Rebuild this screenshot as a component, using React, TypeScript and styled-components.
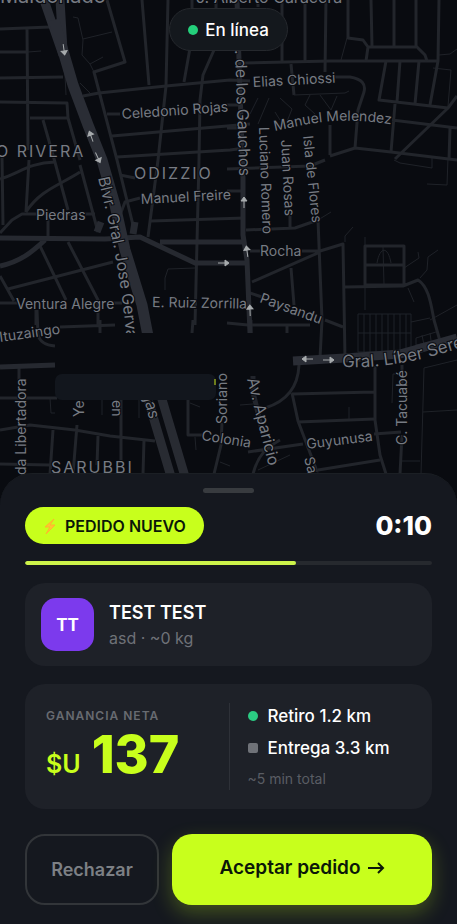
import React from "react";
import styled, { createGlobalStyle } from "styled-components";

const GlobalStyle = createGlobalStyle`
  * { box-sizing: border-box; }
  body { margin: 0; background: #090b10; }
  button { font: inherit; cursor: pointer; }
`;

const Screen = styled.main`
  position: relative;
  min-height: 100vh;
  display: flex;
  flex-direction: column;
  overflow: hidden;
  font-family: Inter, sans-serif;
  color: #fff;
`;

const MapCanvas = styled.svg`
  position: absolute;
  inset: 0;
  width: 100%;
  height: 100%;
`;

const StatusPill = styled.div`
  position: relative;
  align-self: center;
  display: flex;
  align-items: center;
  gap: 7px;
  height: 43px;
  margin: 8px 0 24px;
  padding: 0 18px;
  border: 1px solid #25282d;
  border-radius: 22px;
  background: #14181d;
  font: 500 17px/24px Inter, sans-serif;
`;

const Marker = styled.span<{ $color: string; $radius: number }>`
  flex: none;
  width: 10px;
  height: 10px;
  border-radius: ${(p) => p.$radius}px;
  background: ${(p) => p.$color};
`;

const Sheet = styled.section`
  position: relative;
  margin-top: auto;
  padding: 14px 25px 19px;
  border-radius: 32px 32px 0 0;
  border-top: 1px solid #1b1f24;
  background: #15181f;
  display: flex;
  flex-direction: column;
`;

const Handle = styled.div`
  align-self: center;
  width: 51px;
  height: 5px;
  border-radius: 3px;
  background: #383b3f;
`;

const SheetHeader = styled.header`
  display: flex;
  align-items: center;
  justify-content: space-between;
  margin-top: 14px;
`;

const NewOrderBadge = styled.h1`
  display: flex;
  align-items: center;
  gap: 8px;
  height: 37px;
  margin: 0;
  padding: 0 18px;
  border-radius: 19px;
  background: #c8ff1c;
  color: #0b1708;
  font: 600 16px/20px Inter, sans-serif;
`;

const Timer = styled.time`
  font: 800 26px/36px Inter, sans-serif;
`;

const Track = styled.div`
  height: 4px;
  margin-top: 17px;
  border-radius: 2px;
  background: #26292e;
  overflow: hidden;
`;

const TrackFill = styled.div`
  height: 100%;
  border-radius: 2px;
  background: #cdf34a;
`;

const Card = styled.article`
  margin-top: 18px;
  border-radius: 20px;
  background: #1e2128;
`;

const CustomerCard = styled(Card)`
  display: flex;
  align-items: center;
  gap: 15px;
  padding: 15px 16px;
`;

const Avatar = styled.div`
  display: grid;
  place-items: center;
  width: 53px;
  height: 53px;
  border-radius: 15px;
  background: #7c3aed;
  font: 700 17px/24px Inter, sans-serif;
`;

const CustomerName = styled.h2`
  margin: 0;
  padding-top: 2px;
  font: 600 18px/26px Inter, sans-serif;
`;

const CustomerDetail = styled.p`
  margin: 0;
  color: #6f7278;
  font: 400 16px/25px Inter, sans-serif;
`;

const EarningsCard = styled(Card)`
  display: grid;
  grid-template-columns: 1fr 1fr;
  padding: 19px 21px;
`;

const Earnings = styled.div`
  padding-top: 4px;
`;

const EarningsLabel = styled.h3`
  margin: 0;
  color: #686b71;
  font: 600 12px/17px Inter, sans-serif;
  letter-spacing: 1px;
`;

const Amount = styled.p`
  display: flex;
  align-items: baseline;
  gap: 11px;
  margin: 0;
  color: #c8ff1c;
  font: 800 52px/62px Inter, sans-serif;
`;

const Currency = styled.span`
  font: 600 25px/36px Inter, sans-serif;
`;

const Trip = styled.div`
  padding-left: 18px;
  border-left: 1px solid #2e3138;
`;

const Stop = styled.div`
  display: flex;
  align-items: center;
  gap: 10px;
  height: 26px;
  margin-bottom: 6px;
  font: 500 17px/24px Inter, sans-serif;
`;

const TripTime = styled.p`
  margin: 0;
  color: #5a5d64;
  font: 400 14px/23px Inter, sans-serif;
`;

const Actions = styled.footer`
  display: grid;
  grid-template-columns: 134fr 260fr;
  gap: 13px;
  margin-top: 25px;
`;

const ActionButton = styled.button<{ $primary?: boolean }>`
  display: flex;
  align-items: center;
  justify-content: center;
  gap: 6px;
  height: 71px;
  padding: ${(p) => (p.$primary ? "0 8px 4px" : "0 8px")};
  border: ${(p) => (p.$primary ? "0" : "2px solid #323539")};
  border-radius: 20px;
  background: ${(p) => (p.$primary ? "#c8ff1c" : "transparent")};
  color: ${(p) => (p.$primary ? "#0b1708" : "#7d8085")};
  box-shadow: ${(p) => (p.$primary ? "0 8px 20px rgba(200, 255, 28, 0.25)" : "none")};
  && { font: 600 ${(p) => (p.$primary ? 19 : 18)}px/24px Inter, sans-serif; }
`;

const lanes = [
  "M107 0L125 62L94 72L117 160L133 225M142 0L149 85M168 0L166 86L158 160L148 237M190 48L184 82M214 50L203 75L200 100L199 160L195 325",
  "M192 0V8M216 0V10M83 96L99 93L166 86L230 80L250 81M107 114H120M112 136L250 124M117 157L230 150L245 148",
  "M0 29L50 27M27 28L28 150M0 52H28M0 78L63 77M0 102L67 103L68 118L80 160M30 118H68M43 120L53 155L68 210",
  "M29 160L26 212M0 179C20 173 28 163 55 162M2 155L3 225M26 212C40 190 60 185 80 172M0 233L12 220L22 214H95M80 165L98 232M48 215V238",
  "M40 246L66 300M68 242L98 300V325M8 289L113 262M0 276L14 301M0 303H18M110 303H122M36 310V325",
  "M120 175L135 178M120 215L125 202L140 198M151 221L245 218M245 63L330 61L438 61M335 77H350C362 79 366 84 364 92L358 110L355 148",
  "M258 0V7M282 0V62M305 0V62M326 0L325 72M348 0V38L363 40L368 47L366 61M371 0L372 46M394 0V46M416 0V46L425 55L427 61M368 47H416",
  "M439 0L438 61L430 105M386 61L379 100L448 108L457 96M400 61L397 102M419 61L415 104M448 108L395 159M395 104L391 152M392 120L457 128M450 128L449 160",
  "M291 64L294 95M330 125V155M330 156L355 148L391 152L457 160M227 105H238M227 128H238",
  "M227 191H241M246 230L295 228L318 220M290 212V228M318 220L322 320L320 358M250 251H260M302 251H320L343 244L345 358M252 282L320 252M291 268L294 305M250 293L265 298",
  "M365 246H404V285H365ZM365 265H404M345 287L403 286L418 280C429 287 431 305 434 320L442 348M227 169L310 166L325 160",
  "M227 323L248 325H310M251 320V333M287 325V333M325 320L343 327M299 365C298 388 285 402 265 408M292 393L298 421L318 474M292 394L374 392M375 366V420L380 455L386 474",
  "M298 422L375 419M374 434L401 432M248 452L303 444M318 470L380 460M402 435L400 474M402 365V385M253 474C258 455 266 448 280 440",
  "M19 367V380M0 398H57M37 310L38 335C40 342 45 345 55 346M60 327L115 325M100 320V333M0 430L30 425L75 430L110 436L155 441M53 430L50 474M77 425L73 474M98 436L97 465M121 400V460M144 440L143 474M0 464L50 465M188 400V435H205M222 423L221 445L214 474M193 320L192 333",
];

const avenues = "M0 238L105 239L140 237L195 263L247 263M160 242H245M0 266C20 262 32 252 45 240M0 367L55 365M237 0L239 60L243 178V235L247 260L250 333";

const alleys =
  "M73 17L78 18L83 40L82 55L90 64L103 57M83 39L112 32M90 64L94 72M28 52L41 51M55 20L65 75L66 95M80 83L92 95M165 290V278L168 269L195 268M347 38L341 60M439 55L450 54L457 49M433 68L451 70L448 106M294 95L345 93L349 91M258 98L250 114M269 98L258 124M280 98L292 109L286 124M310 95L305 105L315 114M320 95L331 110L337 96M275 112L280 120M365 237V310M383 247L384 285M377 263C380 246 388 246 391 263M404 268L419 258L418 252M420 278L427 270L428 257L438 250M408 288L414 302M457 305L430 320M345 242V236L353 227M318 220L331 212M394 160L400 163L432 168V158M427 184L447 185L448 158M358 314H411V352H358ZM358 333H411M364 314V352M370 314V352M376 314V352M382 314V352M388 314V352M394 314V352M400 314V352M406 314V352M416 338L436 332M416 338V352M422 335L425 350M430 333L432 348M416 345L438 340M411 322L430 318M349 407V419M421 474L424 368L457 360M423 412L457 410M402 461H420M392 403L393 374H402M50 398L51 413H55M102 400V415M139 400V418M190 403L200 407M195 437L196 450M240 405L253 404M258 470L290 455M220 462L230 466M0 505H4M0 570H3M455 602V612";

type LabelProps = { x: number; y: number; angle?: number; size?: number; children: string };
const MapLabel = ({ x, y, angle = 0, size = 15, children }: LabelProps) => (
  <text x={x} y={y} fontSize={size} transform={`rotate(${angle} ${x} ${y})`}>
    {children}
  </text>
);

const DistrictLabel = ({ x, y, children }: LabelProps) => (
  <text x={x} y={y} fontSize={16} letterSpacing={2}>
    {children}
  </text>
);

const DirectionArrow = ({ x, y, angle }: { x: number; y: number; angle: number }) => (
  <path d="M-6 0H4M1 -3L5 0L1 3Z" transform={`translate(${x} ${y}) rotate(${angle})`} />
);

const CityMap = () => (
  <MapCanvas viewBox="0 0 457 924" preserveAspectRatio="xMidYMin slice" role="img" aria-label="Mapa">
    <rect width="457" height="924" fill="#090b10" />
    <g fill="none" strokeLinejoin="round">
      <path d={alleys} stroke="#1f2228" strokeWidth="1" />
      {lanes.map((d) => (
        <path key={d} d={d} stroke="#22252b" strokeWidth="3" />
      ))}
      <path d={avenues} stroke="#262930" strokeWidth="5" />
      <path d="M101 222L97 232M135 222L133 234" stroke="#262930" strokeWidth="7" />
      <path d="M253 376V392L262 430" stroke="#22252c" strokeWidth="5" />
      <path d="M44 0L63 55M60 0L63 50" stroke="#2a2d35" strokeWidth="9" />
      <path d="M54 20L73 85L88 125L102 160L115 205L125 250L142 305L148 336" stroke="#2a2d35" strokeWidth="11" />
      <path d="M147 396L172 480M161 396L186 480" stroke="#282b32" strokeWidth="9" />
      <path d="M293 361L345 358L400 354L457 338" stroke="#2a2d35" strokeWidth="9" />
    </g>
    <rect x="55" y="333" width="238" height="21" fill="#090b10" />
    <defs>
      <path id="boulevard" d="M98 178C108 220 121 270 127 345" />
      <path id="seregni" d="M342 367C380 369 422 361 470 345" />
      <path id="melendez" d="M275 131C305 125 335 115 395 125" />
    </defs>
    <g
      fill="#777b83"
      stroke="#090b10"
      strokeWidth="2"
      paintOrder="stroke"
      fontFamily="Inter, sans-serif"
    >
      <MapLabel x={0} y={3} size={20}>Maldonado</MapLabel>
      <MapLabel x={196} y={3} size={16}>J. Alberto Caraccra</MapLabel>
      <MapLabel x={253} y={87} angle={-3} size={14}>Elias Chiossi</MapLabel>
      <MapLabel x={122} y={119} angle={-4} size={14}>Celedonio Rojas</MapLabel>
      <text fontSize={14}><textPath href="#melendez">Manuel Melendez</textPath></text>
      <DistrictLabel x={-4} y={157}>O RIVERA</DistrictLabel>
      <DistrictLabel x={134} y={179}>ODIZZIO</DistrictLabel>
      <DistrictLabel x={51} y={473}>SARUBBI</DistrictLabel>
      <MapLabel x={141} y={204} angle={-3} size={14}>Manuel Freire</MapLabel>
      <MapLabel x={36} y={220} size={14}>Piedras</MapLabel>
      <MapLabel x={260} y={256} size={14}>Rocha</MapLabel>
      <MapLabel x={16} y={309} size={14}>Ventura Alegre</MapLabel>
      <MapLabel x={152} y={307} angle={1} size={14}>E. Ruiz Zorrilla</MapLabel>
      <MapLabel x={259} y={302} angle={20} size={14}>Paysandu</MapLabel>
      <MapLabel x={0} y={342} angle={-8} size={14}>Ituzaingo</MapLabel>
      <MapLabel x={235} y={50} angle={88} size={16}>. de los Gauchos</MapLabel>
      <MapLabel x={259} y={127} angle={88} size={14}>Luciano Romero</MapLabel>
      <MapLabel x={281} y={140} angle={87} size={14}>Juan Rosas</MapLabel>
      <MapLabel x={303} y={136} angle={84} size={14}>Isla de Flores</MapLabel>
      <text fontSize={16}><textPath href="#boulevard">Blvr. Gral. Jose Gerva</textPath></text>
      <text fontSize={17}><textPath href="#seregni">Gral. Líber Sere</textPath></text>
      <MapLabel x={26} y={475} angle={-90} size={14}>da Libertadora</MapLabel>
      <MapLabel x={84} y={417} angle={-90} size={14}>Yer</MapLabel>
      <MapLabel x={112} y={400} angle={90} size={14}>en</MapLabel>
      <MapLabel x={144} y={399} angle={75} size={16}>jas</MapLabel>
      <MapLabel x={227} y={424} angle={-90} size={14}>Soriano</MapLabel>
      <MapLabel x={247} y={379} angle={76} size={16}>Av. Aparicio</MapLabel>
      <MapLabel x={201} y={440} angle={9} size={14}>Colonia</MapLabel>
      <MapLabel x={307} y={449} angle={-7} size={14}>Guyunusa</MapLabel>
      <MapLabel x={304} y={458} angle={76} size={14}>Sal</MapLabel>
      <MapLabel x={407} y={445} angle={-90} size={14}>C. Tacuabé</MapLabel>
    </g>
    <rect x="61" y="333" width="154" height="45" fill="#090b10" />
    <rect x="55" y="374" width="161" height="26" rx="7" fill="#12161d" />
    <path d="M215 379V385" fill="none" stroke="#c8e51c" strokeWidth="1" />
    <g fill="#a7abad" stroke="#a7abad" strokeWidth="1">
      <DirectionArrow x={64} y={50} angle={82} />
      <DirectionArrow x={91} y={136} angle={-110} />
      <DirectionArrow x={98} y={158} angle={65} />
      <DirectionArrow x={224} y={263} angle={0} />
      <DirectionArrow x={244} y={202} angle={-90} />
      <DirectionArrow x={247} y={251} angle={-98} />
      <DirectionArrow x={250} y={310} angle={-92} />
      <DirectionArrow x={307} y={359} angle={180} />
      <DirectionArrow x={329} y={360} angle={0} />
    </g>
  </MapCanvas>
);

const BoltIcon = () => (
  <svg width="14" height="18" viewBox="0 0 14 18" aria-hidden="true">
    <path d="M11 2L2 10H7L3 17L12 8H7Z" fill="#ffc531" stroke="#ffb52d" strokeWidth="1" />
  </svg>
);

const ArrowIcon = () => (
  <svg width="18" height="14" viewBox="0 0 18 14" fill="none" stroke="currentColor" strokeWidth="2" aria-hidden="true">
    <path d="M1 7H16M11 2L16 7L11 12" />
  </svg>
);

export default function App() {
  const remaining = 10;
  const total = 15;
  return (
    <>
      <GlobalStyle />
      <Screen>
        <CityMap />
        <StatusPill role="status">
          <Marker $color="#24cf7b" $radius={5} />
          En línea
        </StatusPill>
        <Sheet>
          <Handle />
          <SheetHeader>
            <NewOrderBadge>
              <BoltIcon />
              PEDIDO NUEVO
            </NewOrderBadge>
            <Timer>0:{remaining}</Timer>
          </SheetHeader>
          <Track role="progressbar" aria-label="Tiempo restante" aria-valuenow={remaining} aria-valuemax={total}>
            <TrackFill style={{ width: `${(remaining / total) * 100}%` }} />
          </Track>
          <CustomerCard>
            <Avatar>TT</Avatar>
            <div>
              <CustomerName>TEST TEST</CustomerName>
              <CustomerDetail>asd · ~0 kg</CustomerDetail>
            </div>
          </CustomerCard>
          <EarningsCard>
            <Earnings>
              <EarningsLabel>GANANCIA NETA</EarningsLabel>
              <Amount>
                <Currency>$U</Currency>137
              </Amount>
            </Earnings>
            <Trip>
              <Stop>
                <Marker $color="#2bcb83" $radius={5} />
                Retiro 1.2 km
              </Stop>
              <Stop>
                <Marker $color="#6f7278" $radius={2} />
                Entrega 3.3 km
              </Stop>
              <TripTime>~5 min total</TripTime>
            </Trip>
          </EarningsCard>
          <Actions>
            <ActionButton type="button">Rechazar</ActionButton>
            <ActionButton type="button" $primary>
              Aceptar pedido
              <ArrowIcon />
            </ActionButton>
          </Actions>
        </Sheet>
      </Screen>
    </>
  );
}
